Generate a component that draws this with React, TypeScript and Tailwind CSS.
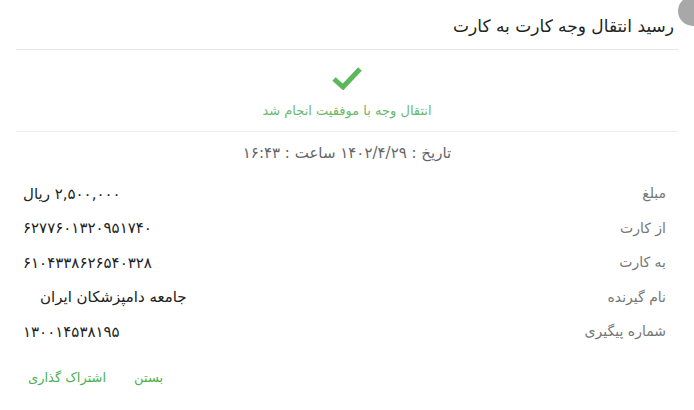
const rows: { label: string; value: string; pad?: boolean }[] = [
  { label: 'مبلغ', value: '۲,۵۰۰,۰۰۰ ریال' },
  { label: 'از کارت', value: '۶۲۷۷۶۰۱۳۲۰۹۵۱۷۴۰' },
  { label: 'به کارت', value: '۶۱۰۴۳۳۸۶۲۶۵۴۰۳۲۸' },
  { label: 'نام گیرنده', value: 'جامعه دامپزشکان ایران', pad: true },
  { label: 'شماره پیگیری', value: '۱۳۰۰۱۴۵۳۸۱۹۵' },
]

export default function App() {
  return (
    <div
      dir="rtl"
      className="relative w-[694px] h-[410px] overflow-hidden bg-white"
      style={{ fontFamily: '"DejaVu Sans", "Noto Sans", sans-serif' }}
    >
      {/* close button peeking from the corner */}
      <div className="absolute -right-[14px] -top-[4px] w-[30px] h-[30px] rounded-full bg-[#a8a8a8]" />

      <div className="px-[16px]">
        <div className="h-[50px] flex items-center pt-[4px] pr-[4px] border-b border-[#e6e6e6]">
          <h1 className="text-[17px] text-[#222]">رسید انتقال وجه کارت به کارت</h1>
        </div>

        <div className="h-[82px] flex flex-col items-center border-b border-[#ececec]">
          <svg width="30" height="24" viewBox="0 0 30 24" className="mt-[16px]">
            <path d="M2 13 L11 21 L28 3" fill="none" stroke="#5cb85c" strokeWidth="5" strokeLinejoin="miter" />
          </svg>
          <p className="mt-[11px] text-[13px] text-[#6cb86c]">انتقال وجه با موفقیت انجام شد</p>
        </div>

        <p className="mt-[10px] text-center text-[15px] text-[#666]">تاریخ : ۱۴۰۲/۴/۲۹ ساعت : ۱۶:۴۳</p>

        <div className="mt-[12px] flex flex-col pr-[12px] pl-[7px]">
          {rows.map((r) => (
            <div key={r.label} className="h-[34.5px] flex items-center justify-between">
              <span className="text-[14px] text-[#777]">{r.label}</span>
              <span className={`text-[15px] text-[#222] ${r.pad ? 'pl-[17px]' : ''}`}>{r.value}</span>
            </div>
          ))}
        </div>

        <div className="mt-[19px] flex justify-end gap-[28px] pl-[12px] text-[13px] text-[#4caf50]">
          <button>بستن</button>
          <button>اشتراک گذاری</button>
        </div>
      </div>
    </div>
  )
}
